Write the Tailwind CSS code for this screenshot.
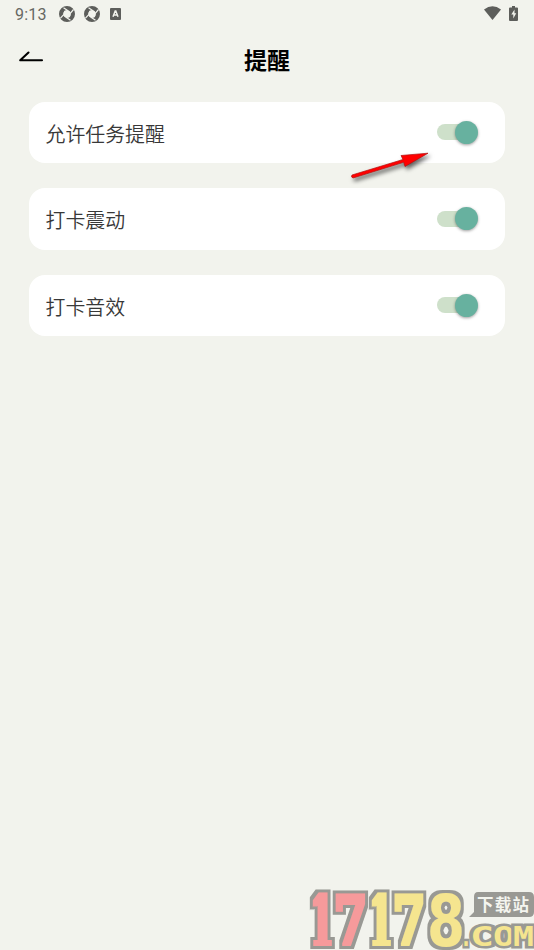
<!DOCTYPE html>
<html lang="zh-CN">
<head>
<meta charset="utf-8">
<title>提醒</title>
<script src="https://cdn.jsdelivr.net/npm/@tailwindcss/browser@4"></script>
</head>
<body class="relative h-[950px] w-[534px] overflow-hidden bg-[#f2f3ed] font-['Noto_Sans_CJK_SC',sans-serif] text-[#383838]">
<svg class="absolute size-0" aria-hidden="true">
  <defs>
    <g id="shutter">
      <circle cx="8" cy="8" r="5.900" fill="none" stroke="#5d5e5b" stroke-width="4.200"/>
      <path d="M5.300 4.700 9 4.300 11.700 7.300 10.700 11.300 7 11.700 4.300 8.700Z" fill="#f2f3ed"/>
      <path d="M9 4.700 4.500 1.800M11.300 7.300l3.200-3.800M7 11.300l4.500 3M4.700 8.700 1.500 12.200" stroke="#f2f3ed" stroke-width="1.200"/>
    </g>
    <filter id="outline" x="-30%" y="-20%" width="160%" height="140%">
      <feMorphology in="SourceGraphic" operator="dilate" radius="2 1" result="face"/>
      <feMorphology in="face" operator="dilate" radius="3" result="wide"/>
      <feFlood flood-color="#999994"/>
      <feComposite in2="wide" operator="in" result="edge"/>
      <feMerge><feMergeNode in="edge"/><feMergeNode in="face"/></feMerge>
    </filter>
    <filter id="outline-thin" x="-30%" y="-30%" width="160%" height="160%">
      <feMorphology in="SourceGraphic" operator="dilate" radius="3" result="wide"/>
      <feFlood flood-color="#999994"/>
      <feComposite in2="wide" operator="in" result="edge"/>
      <feMerge><feMergeNode in="edge"/><feMergeNode in="SourceGraphic"/></feMerge>
    </filter>
  </defs>
</svg>
<header>
  <div class="flex h-7 items-center justify-between pl-[15px] pr-4">
    <div class="flex items-center">
      <span class="w-[44px] pt-px font-[Roboto,sans-serif] text-[16px] leading-7 tracking-[0.2px] text-[#666763]">9:13</span>
      <svg class="h-4 w-4" viewBox="0 0 16 16"><use href="#shutter"/></svg>
      <svg class="ml-[9px] h-4 w-4" viewBox="0 0 16 16"><use href="#shutter"/></svg>
      <svg class="ml-[10px] h-3 w-[11px]" viewBox="0 0 11 12"><rect width="11" height="12" rx="1" fill="#5d5e5b"/><path d="M3 8.800 5.200 3h.6L8 8.800M3.800 7h3.400" fill="none" stroke="#f2f3ed" stroke-width="1.500"/></svg>
    </div>
    <div class="flex items-center gap-2 pb-[2px]">
      <svg class="h-[14px] w-[17px]" viewBox="0 0 17 14"><path d="M0 3.500Q8.500-3 17 3.500L8.500 14Z" fill="#5d5e5b"/></svg>
      <svg class="h-[15px] w-[9px]" viewBox="0 0 9 15"><path d="M1 1.500h2V0h3v1.500h2q1 0 1 1V14q0 1-1 1H1q-1 0-1-1V2.500q0-1 1-1Z" fill="#5d5e5b"/><path d="M5.500 3.500 2.300 8.500h2v4l2.900-5.300H5.500Z" fill="#f2f3ed"/></svg>
    </div>
  </div>
  <div class="grid h-[73px] grid-cols-[60px_1fr_60px]">
    <button class="flex pl-[18px] pt-[22px]" aria-label="返回"><svg class="h-[14px] w-[26px]" viewBox="0 0 26 14"><path d="M10.500 2.500 2.200 10.300H24" fill="none" stroke="#000" stroke-width="2.100" stroke-linecap="round" stroke-linejoin="round"/></svg></button>
    <h1 class="pt-[15px] text-center text-[23px] font-bold leading-8 text-black">提醒</h1>
  </div>
</header>
<main class="flex flex-col gap-[25px] px-[29px] pt-[0.500px]">
  <div class="flex h-[61.500px] items-center justify-between rounded-[16px] bg-white pl-[16.500px] pr-[27px]">
    <span class="pt-[3px] text-[19.900px] font-[350]">允许任务提醒</span>
    <div class="flex h-[23px] w-[41px] items-center"><div class="flex h-4 w-[38px] items-center rounded-full bg-[#cee0ca]"><div class="ml-[18px] size-[23px] shrink-0 rounded-full bg-[#67b19f] shadow-[0_1px_3px_rgba(0,0,0,.38)]"></div></div></div>
  </div>
  <div class="flex h-[61.500px] items-center justify-between rounded-[16px] bg-white pl-[16.500px] pr-[27px]">
    <span class="pt-[2px] text-[19.900px] font-[350]">打卡震动</span>
    <div class="flex h-[23px] w-[41px] items-center"><div class="flex h-4 w-[38px] items-center rounded-full bg-[#cee0ca]"><div class="ml-[18px] size-[23px] shrink-0 rounded-full bg-[#67b19f] shadow-[0_1px_3px_rgba(0,0,0,.38)]"></div></div></div>
  </div>
  <div class="flex h-[61.500px] items-center justify-between rounded-[16px] bg-white pl-[16.500px] pr-[27px]">
    <span class="pt-[3px] text-[19.900px] font-[350]">打卡音效</span>
    <div class="flex h-[23px] w-[41px] items-center"><div class="flex h-4 w-[38px] items-center rounded-full bg-[#cee0ca]"><div class="ml-[18px] size-[23px] shrink-0 rounded-full bg-[#67b19f] shadow-[0_1px_3px_rgba(0,0,0,.38)]"></div></div></div>
  </div>
</main>
<svg class="absolute left-[340px] top-[140px] h-[50px] w-[100px] drop-shadow-[2px_3px_2px_rgba(0,0,0,.6)]" viewBox="340 140 100 50"><path d="M352 175 403 159.500 401 155.500 428 153.200 405 166.500 403.700 162.300 353 178Q350.500 177 352 175Z" fill="#f00" stroke="#b01010" stroke-width=".7"/></svg>
<svg class="absolute bottom-0 right-0 h-[66px] w-[230px]" viewBox="304 884 230 66">
  <g font-family="DejaVu Serif" font-weight="bold" font-size="70" filter="url(#outline)">
    <text x="311" y="945" fill="#f69a9b" textLength="22" lengthAdjust="spacingAndGlyphs">1</text>
    <text x="334" y="945" fill="#f69a9b" textLength="33" lengthAdjust="spacingAndGlyphs">7</text>
    <text x="370" y="945" fill="#f5e58f" textLength="22" lengthAdjust="spacingAndGlyphs">1</text>
    <text x="393" y="945" fill="#f5e58f" textLength="32" lengthAdjust="spacingAndGlyphs">7</text>
  </g>
  <text x="427" y="946" font-family="DejaVu Sans" font-weight="bold" font-size="71" fill="#f5e58f" textLength="38" lengthAdjust="spacingAndGlyphs" filter="url(#outline-thin)">8</text>
  <g font-family="DejaVu Sans Mono" font-weight="bold" font-size="26" fill="#f5e58f" stroke="#999994" stroke-width="5" paint-order="stroke">
    <text x="460" y="946" textLength="12" lengthAdjust="spacingAndGlyphs">.</text>
    <text x="470" y="946" textLength="24" lengthAdjust="spacingAndGlyphs">C</text>
    <text x="493" y="946" textLength="22" lengthAdjust="spacingAndGlyphs">O</text>
    <text x="513" y="946" textLength="21" lengthAdjust="spacingAndGlyphs">M</text>
  </g>
  <path d="M478 892h51q5 0 5 5v15q0 5-5 5h-60l5-5v-15q0-5 4-5Z" fill="#999994"/>
  <text x="477" y="910.500" font-family="Noto Sans CJK SC" font-weight="bold" font-size="16.500" fill="#f4f5ef" textLength="52">下载站</text>
</svg>
</body>
</html>
